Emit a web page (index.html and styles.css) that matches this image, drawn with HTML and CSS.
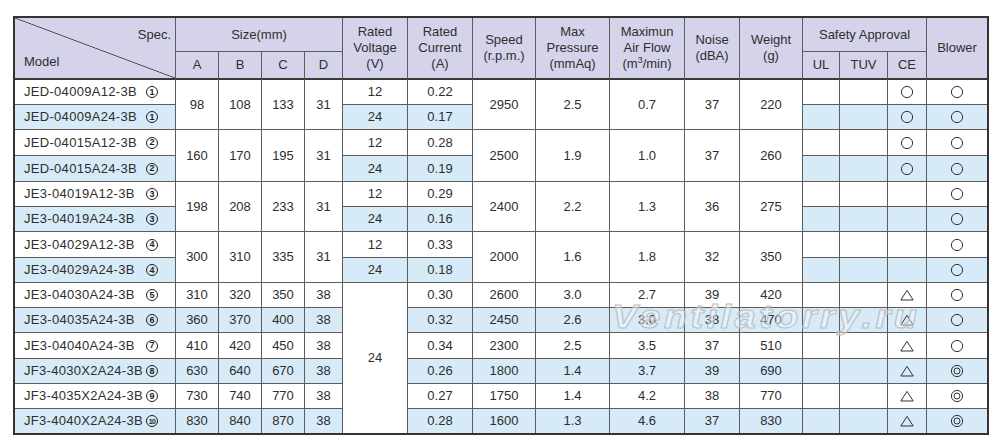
FILE: index.html
```html
<!DOCTYPE html>
<html lang="en">
<head>
<meta charset="utf-8">
<title>Blower specifications</title>
<link rel="stylesheet" href="styles.css">
</head>
<body>
<div class="sheet">
  <!-- header -->
  <div class="c h diag r2 hb"><span class="spec">Spec.</span><span class="model-h">Model</span></div>
  <div class="c h s4"><span>Size(mm)</span></div>
  <div class="c h r2 hb"><span>Rated<br>Voltage<br>(V)</span></div>
  <div class="c h r2 hb"><span>Rated<br>Current<br>(A)</span></div>
  <div class="c h r2 hb"><span>Speed<br>(r.p.m.)</span></div>
  <div class="c h r2 hb"><span>Max<br>Pressure<br>(mmAq)</span></div>
  <div class="c h r2 hb"><span>Maximun<br>Air Flow<br>(m<sup>3</sup>/min)</span></div>
  <div class="c h r2 hb"><span>Noise<br>(dBA)</span></div>
  <div class="c h r2 hb"><span>Weight<br>(g)</span></div>
  <div class="c h s3"><span>Safety Approval</span></div>
  <div class="c h r2 hb lc"><span>Blower</span></div>
  <div class="c h hb">A</div>
  <div class="c h hb">B</div>
  <div class="c h hb">C</div>
  <div class="c h hb">D</div>
  <div class="c h hb">UL</div>
  <div class="c h hb">TUV</div>
  <div class="c h hb">CE</div>

  <!-- pair 1 -->
  <div class="c m"><span class="name">JED-04009A12-3B</span><span class="cn">1</span></div>
  <div class="c r2">98</div><div class="c r2">108</div><div class="c r2">133</div><div class="c r2">31</div>
  <div class="c">12</div><div class="c">0.22</div>
  <div class="c r2">2950</div><div class="c r2">2.5</div><div class="c r2">0.7</div><div class="c r2">37</div><div class="c r2">220</div>
  <div class="c"></div><div class="c"></div>
  <div class="c"><svg class="sym" viewBox="0 0 14 14"><circle cx="7" cy="7" r="5.6"/></svg></div>
  <div class="c lc"><svg class="sym" viewBox="0 0 14 14"><circle cx="7" cy="7" r="5.6"/></svg></div>

  <div class="c m b"><span class="name">JED-04009A24-3B</span><span class="cn">1</span></div>
  <div class="c b">24</div><div class="c b">0.17</div>
  <div class="c b"></div><div class="c b"></div>
  <div class="c b"><svg class="sym" viewBox="0 0 14 14"><circle cx="7" cy="7" r="5.6"/></svg></div>
  <div class="c b lc"><svg class="sym" viewBox="0 0 14 14"><circle cx="7" cy="7" r="5.6"/></svg></div>

  <!-- pair 2 -->
  <div class="c m"><span class="name">JED-04015A12-3B</span><span class="cn">2</span></div>
  <div class="c r2">160</div><div class="c r2">170</div><div class="c r2">195</div><div class="c r2">31</div>
  <div class="c">12</div><div class="c">0.28</div>
  <div class="c r2">2500</div><div class="c r2">1.9</div><div class="c r2">1.0</div><div class="c r2">37</div><div class="c r2">260</div>
  <div class="c"></div><div class="c"></div>
  <div class="c"><svg class="sym" viewBox="0 0 14 14"><circle cx="7" cy="7" r="5.6"/></svg></div>
  <div class="c lc"><svg class="sym" viewBox="0 0 14 14"><circle cx="7" cy="7" r="5.6"/></svg></div>

  <div class="c m b"><span class="name">JED-04015A24-3B</span><span class="cn">2</span></div>
  <div class="c b">24</div><div class="c b">0.19</div>
  <div class="c b"></div><div class="c b"></div>
  <div class="c b"><svg class="sym" viewBox="0 0 14 14"><circle cx="7" cy="7" r="5.6"/></svg></div>
  <div class="c b lc"><svg class="sym" viewBox="0 0 14 14"><circle cx="7" cy="7" r="5.6"/></svg></div>

  <!-- pair 3 -->
  <div class="c m"><span class="name">JE3-04019A12-3B</span><span class="cn">3</span></div>
  <div class="c r2">198</div><div class="c r2">208</div><div class="c r2">233</div><div class="c r2">31</div>
  <div class="c">12</div><div class="c">0.29</div>
  <div class="c r2">2400</div><div class="c r2">2.2</div><div class="c r2">1.3</div><div class="c r2">36</div><div class="c r2">275</div>
  <div class="c"></div><div class="c"></div><div class="c"></div>
  <div class="c lc"><svg class="sym" viewBox="0 0 14 14"><circle cx="7" cy="7" r="5.6"/></svg></div>

  <div class="c m b"><span class="name">JE3-04019A24-3B</span><span class="cn">3</span></div>
  <div class="c b">24</div><div class="c b">0.16</div>
  <div class="c b"></div><div class="c b"></div><div class="c b"></div>
  <div class="c b lc"><svg class="sym" viewBox="0 0 14 14"><circle cx="7" cy="7" r="5.6"/></svg></div>

  <!-- pair 4 -->
  <div class="c m"><span class="name">JE3-04029A12-3B</span><span class="cn">4</span></div>
  <div class="c r2">300</div><div class="c r2">310</div><div class="c r2">335</div><div class="c r2">31</div>
  <div class="c">12</div><div class="c">0.33</div>
  <div class="c r2">2000</div><div class="c r2">1.6</div><div class="c r2">1.8</div><div class="c r2">32</div><div class="c r2">350</div>
  <div class="c"></div><div class="c"></div><div class="c"></div>
  <div class="c lc"><svg class="sym" viewBox="0 0 14 14"><circle cx="7" cy="7" r="5.6"/></svg></div>

  <div class="c m b"><span class="name">JE3-04029A24-3B</span><span class="cn">4</span></div>
  <div class="c b">24</div><div class="c b">0.18</div>
  <div class="c b"></div><div class="c b"></div><div class="c b"></div>
  <div class="c b lc"><svg class="sym" viewBox="0 0 14 14"><circle cx="7" cy="7" r="5.6"/></svg></div>

  <!-- 24V group -->
  <div class="c m"><span class="name">JE3-04030A24-3B</span><span class="cn">5</span></div>
  <div class="c">310</div><div class="c">320</div><div class="c">350</div><div class="c">38</div>
  <div class="c r6 lr">24</div>
  <div class="c">0.30</div><div class="c">2600</div><div class="c">3.0</div><div class="c">2.7</div><div class="c">39</div><div class="c">420</div>
  <div class="c"></div><div class="c"></div>
  <div class="c"><svg class="sym" viewBox="0 0 14 14"><polygon points="7,2.4 13.2,12 0.8,12"/></svg></div>
  <div class="c lc"><svg class="sym" viewBox="0 0 14 14"><circle cx="7" cy="7" r="5.6"/></svg></div>

  <div class="c m b"><span class="name">JE3-04035A24-3B</span><span class="cn">6</span></div>
  <div class="c b">360</div><div class="c b">370</div><div class="c b">400</div><div class="c b">38</div>
  <div class="c b">0.32</div><div class="c b">2450</div><div class="c b">2.6</div><div class="c b">3.0</div><div class="c b">38</div><div class="c b">470</div>
  <div class="c b"></div><div class="c b"></div>
  <div class="c b"><svg class="sym" viewBox="0 0 14 14"><polygon points="7,2.4 13.2,12 0.8,12"/></svg></div>
  <div class="c b lc"><svg class="sym" viewBox="0 0 14 14"><circle cx="7" cy="7" r="5.6"/></svg></div>

  <div class="c m"><span class="name">JE3-04040A24-3B</span><span class="cn">7</span></div>
  <div class="c">410</div><div class="c">420</div><div class="c">450</div><div class="c">38</div>
  <div class="c">0.34</div><div class="c">2300</div><div class="c">2.5</div><div class="c">3.5</div><div class="c">37</div><div class="c">510</div>
  <div class="c"></div><div class="c"></div>
  <div class="c"><svg class="sym" viewBox="0 0 14 14"><polygon points="7,2.4 13.2,12 0.8,12"/></svg></div>
  <div class="c lc"><svg class="sym" viewBox="0 0 14 14"><circle cx="7" cy="7" r="5.6"/></svg></div>

  <div class="c m b"><span class="name">JF3-4030X2A24-3B</span><span class="cn">8</span></div>
  <div class="c b">630</div><div class="c b">640</div><div class="c b">670</div><div class="c b">38</div>
  <div class="c b">0.26</div><div class="c b">1800</div><div class="c b">1.4</div><div class="c b">3.7</div><div class="c b">39</div><div class="c b">690</div>
  <div class="c b"></div><div class="c b"></div>
  <div class="c b"><svg class="sym" viewBox="0 0 14 14"><polygon points="7,2.4 13.2,12 0.8,12"/></svg></div>
  <div class="c b lc"><svg class="sym" viewBox="0 0 14 14"><circle cx="7" cy="7" r="5.6"/><circle cx="7" cy="7" r="3"/></svg></div>

  <div class="c m"><span class="name">JF3-4035X2A24-3B</span><span class="cn">9</span></div>
  <div class="c">730</div><div class="c">740</div><div class="c">770</div><div class="c">38</div>
  <div class="c">0.27</div><div class="c">1750</div><div class="c">1.4</div><div class="c">4.2</div><div class="c">38</div><div class="c">770</div>
  <div class="c"></div><div class="c"></div>
  <div class="c"><svg class="sym" viewBox="0 0 14 14"><polygon points="7,2.4 13.2,12 0.8,12"/></svg></div>
  <div class="c lc"><svg class="sym" viewBox="0 0 14 14"><circle cx="7" cy="7" r="5.6"/><circle cx="7" cy="7" r="3"/></svg></div>

  <div class="c m b lr"><span class="name">JF3-4040X2A24-3B</span><span class="cn ten">10</span></div>
  <div class="c b lr">830</div><div class="c b lr">840</div><div class="c b lr">870</div><div class="c b lr">38</div>
  <div class="c b lr">0.28</div><div class="c b lr">1600</div><div class="c b lr">1.3</div><div class="c b lr">4.6</div><div class="c b lr">37</div><div class="c b lr">830</div>
  <div class="c b lr"></div><div class="c b lr"></div>
  <div class="c b lr"><svg class="sym" viewBox="0 0 14 14"><polygon points="7,2.4 13.2,12 0.8,12"/></svg></div>
  <div class="c b lr lc"><svg class="sym" viewBox="0 0 14 14"><circle cx="7" cy="7" r="5.6"/><circle cx="7" cy="7" r="3"/></svg></div>

  <div class="watermark" aria-hidden="true">Ventilatorry.ru</div>
</div>
</body>
</html>
```

FILE: styles.css
```css
html, body {
  margin: 0;
  padding: 0;
  background: #ffffff;
}

body {
  font-family: "Liberation Sans", Arial, sans-serif;
  font-size: 13px;
  color: #2e2e2e;
}

.sheet {
  position: relative;
  display: grid;
  grid-template-columns: 161px 43px 43px 43px 38px 65px 65px 63px 74px 75px 55px 63px 37px 48px 39px 60px;
  grid-template-rows: 34px 28px 25px 25px 26px 26px 25px 25px 26px 25px 25px 25px 26px 25px 25px 24px;
  width: max-content;
  margin: 16px 0 0 13px;
  border: 2px solid #333333;
  background: #ffffff;
}

.c {
  box-sizing: border-box;
  display: flex;
  align-items: center;
  justify-content: center;
  text-align: center;
  border-right: 1px solid #5c5c5c;
  border-bottom: 1px solid #5c5c5c;
  line-height: 16px;
  white-space: nowrap;
}

.h {
  background: #d5d3ea;
}

.hb {
  border-bottom: 2px solid #3a3a3a;
}

.b {
  background: #d6eaf7;
}

.lc {
  border-right: 0;
}

.lr {
  border-bottom: 0;
}

.r2 {
  grid-row: span 2;
}

.r6 {
  grid-row: span 6;
}

.s3 {
  grid-column: span 3;
}

.s4 {
  grid-column: span 4;
}

sup {
  font-size: 9px;
  line-height: 0;
  vertical-align: 5px;
}

/* diagonal header cell */
.diag {
  flex-direction: column;
  align-items: stretch;
  justify-content: space-between;
  padding: 9px 4px 8px 9px;
  background:
    linear-gradient(to top right, transparent calc(50% - 0.8px), #3a3a3a 50%, transparent calc(50% + 0.8px)),
    #d5d3ea;
}

.spec {
  text-align: right;
}

.model-h {
  text-align: left;
}

/* model cells */
.m {
  justify-content: flex-start;
  padding: 0 17px 0 9px;
}

.name {
  letter-spacing: 0.3px;
}

.cn {
  box-sizing: border-box;
  margin-left: auto;
  width: 12px;
  height: 12px;
  border: 1.3px solid #1e1e1e;
  border-radius: 50%;
  display: inline-flex;
  align-items: center;
  justify-content: center;
  font-size: 9px;
  font-weight: bold;
  line-height: 1;
  color: #1e1e1e;
}

.cn.ten {
  font-size: 7px;
  letter-spacing: -0.7px;
}

.sym {
  width: 14px;
  height: 14px;
  fill: none;
  stroke: #333333;
  stroke-width: 1;
}

.watermark {
  position: absolute;
  left: 597px;
  top: 282px;
  font-size: 33px;
  line-height: 33px;
  font-style: italic;
  font-weight: bold;
  letter-spacing: 3px;
  color: rgba(255, 255, 255, 0.4);
  -webkit-text-stroke: 1px #bdbdbd;
  transform: scaleX(1.15);
  transform-origin: left top;
  white-space: nowrap;
  pointer-events: none;
}
```
